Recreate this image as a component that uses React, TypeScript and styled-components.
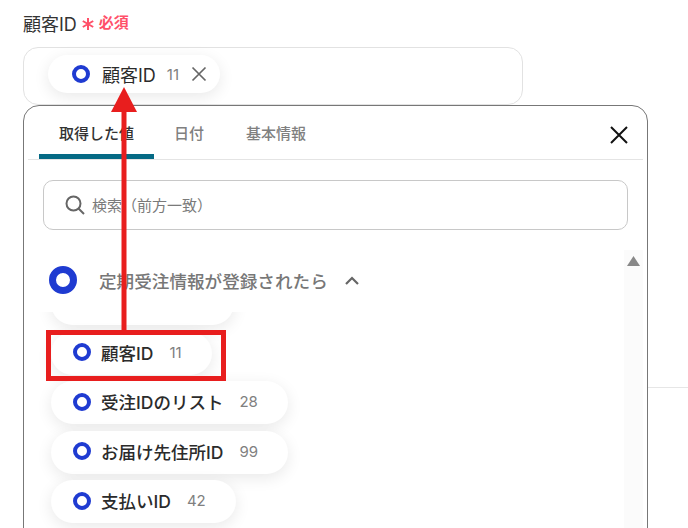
import React from 'react'
import styled, { createGlobalStyle } from 'styled-components'

const GlobalStyle = createGlobalStyle`
  html, body {
    margin: 0;
    background: #fff;
    font-family: Inter, "Noto Sans CJK JP", "Noto Sans", sans-serif;
  }
`
const Page = styled.div`
  position: relative;
  width: 688px;
  height: 528px;
  overflow: hidden;
  box-sizing: border-box;
  padding: 11px 0 0 23px;
`
const SideRule = styled.div`
  position: absolute;
  left: 648px;
  right: 0;
  top: 387px;
  height: 1px;
  background: #e6e6e6;
`
const Label = styled.div`
  display: flex;
  align-items: center;
  height: 23px;
  font-size: 18px;
  color: #333;
  .asterisk {
    margin-left: 5px;
    width: 12px;
    height: 12px;
    margin-top: 2px;
  }
  .required {
    margin-left: 5px;
    margin-bottom: 2px;
    font-size: 15px;
    font-weight: 700;
    color: #ff5069;
  }
`
const Field = styled.div`
  box-sizing: border-box;
  width: 500px;
  height: 58px;
  margin-top: 13px;
  padding: 7px 0 0 24px;
  border: 1px solid #e2e2e2;
  border-radius: 15px;
`
const Chip = styled.div<{ $width: number; $height?: number }>`
  box-sizing: border-box;
  display: flex;
  align-items: center;
  flex: none;
  width: ${(p) => p.$width}px;
  height: ${(p) => p.$height ?? 43}px;
  padding: 0 0 ${(p) => (p.$height ? 0 : 2)}px ${(p) => (p.$height ? 24 : 22)}px;
  background: #fff;
  border-radius: 22px;
  box-shadow: 0 4px 16px rgba(0, 0, 0, 0.09);
`
const ChipName = styled.span<{ $selected?: boolean }>`
  margin-left: ${(p) => (p.$selected ? 12 : 10)}px;
  font-size: ${(p) => (p.$selected ? 18 : 17.5)}px;
  font-weight: ${(p) => (p.$selected ? 400 : 500)};
  color: #2b2b2b;
  white-space: nowrap;
`
const ChipCount = styled.span<{ $selected?: boolean }>`
  margin-left: ${(p) => (p.$selected ? 11 : 16)}px;
  font-size: 15px;
  color: #808080;
`
const RemoveIcon = styled.svg`
  margin-left: 12px;
`
const Modal = styled.div`
  box-sizing: border-box;
  width: 625px;
  height: 470px;
  margin-top: 0;
  padding: 0 4px;
  background: #fff;
  border: 1px solid #777;
  border-radius: 16px;
  overflow: hidden;
`
const TabBar = styled.div`
  position: relative;
  display: flex;
  height: 53px;
  padding-left: 11px;
  border-bottom: 1px solid #e4e4e4;
`
const Tab = styled.div<{ $active?: boolean; $width: number }>`
  box-sizing: border-box;
  width: ${(p) => p.$width}px;
  height: 53px;
  padding-top: 16px;
  text-align: center;
  font-size: 15px;
  line-height: 24px;
  font-weight: 500;
  color: ${(p) => (p.$active ? '#333' : '#808080')};
  border-bottom: ${(p) => (p.$active ? '5px solid #056a85' : 'none')};
  border-radius: ${(p) => (p.$active ? '4px 4px 0 0' : '0')};
`
const CloseButton = styled.svg`
  position: absolute;
  right: 15px;
  top: 20px;
`
const SearchBox = styled.div`
  box-sizing: border-box;
  display: flex;
  align-items: center;
  width: 585px;
  height: 50px;
  margin: 20px 0 0 15px;
  padding-left: 21px;
  border: 1px solid #c8c8c8;
  border-radius: 10px;
  font-size: 15px;
  color: #7a7a7a;
  span {
    margin: 0 0 2px 7px;
  }
`
const Results = styled.div`
  position: relative;
  display: flex;
  flex-direction: column;
  height: 278px;
  margin-top: 20px;
`
const GroupHeader = styled.div`
  display: flex;
  align-items: center;
  height: 60px;
  margin-bottom: 2px;
  padding-left: 21px;
  font-size: 17.6px;
  font-weight: 500;
  color: #777;
  .name {
    margin-left: 22px;
  }
  .chevron {
    margin-left: 17px;
  }
`
const ChipList = styled.div`
  flex: 1;
  display: flex;
  flex-direction: column;
  gap: 6.5px;
  margin-right: 24px;
  padding-left: 23px;
  overflow: hidden;
`
const ClippedChip = styled(Chip)`
  margin-top: -30px;
`
const Scrollbar = styled.div`
  position: absolute;
  right: 0;
  top: 0;
  bottom: 0;
  width: 19px;
  background: #fbfbfb;
  display: flex;
  justify-content: center;
  padding-top: 6px;
  box-sizing: border-box;
`
const HighlightBox = styled.div`
  position: absolute;
  left: 46px;
  top: 330px;
  width: 180px;
  height: 51px;
  box-sizing: border-box;
  border: 5px solid #e81e1e;
`
const Arrow = styled.svg`
  position: absolute;
  left: 108px;
  top: 84px;
`

const Ring = ({ size = 18, stroke = 4 }: { size?: number; stroke?: number }) => (
  <svg width={size} height={size} viewBox={`0 0 ${size} ${size}`} style={{ flex: 'none' }}>
    <circle
      cx={size / 2}
      cy={size / 2}
      r={(size - stroke) / 2}
      fill="none"
      stroke="#1f3bd1"
      strokeWidth={stroke}
    />
  </svg>
)

const outputs = [
  { name: '顧客ID', count: 11, width: 161 },
  { name: '受注IDのリスト', count: 28, width: 237 },
  { name: 'お届け先住所ID', count: 99, width: 237 },
  { name: '支払いID', count: 42, width: 185 },
]

export default function App() {
  return (
    <Page>
      <GlobalStyle />
      <SideRule />
      <Label>
        顧客ID
        <svg className="asterisk" viewBox="0 0 12 12">
          <path
            d="M6 0v12M.8 3l10.4 6M11.2 3L.8 9"
            stroke="#ff5069"
            strokeWidth="2"
            fill="none"
          />
        </svg>
        <span className="required">必須</span>
      </Label>
      <Field>
        <Chip $width={172} $height={38}>
          <Ring />
          <ChipName $selected>顧客ID</ChipName>
          <ChipCount $selected>11</ChipCount>
          <RemoveIcon width="16" height="16" viewBox="0 0 16 16">
            <path d="M1.5 1.5l13 13M14.5 1.5l-13 13" stroke="#666" strokeWidth="1.7" fill="none" />
          </RemoveIcon>
        </Chip>
      </Field>
      <Modal>
        <TabBar>
          <Tab $active $width={115}>取得した値</Tab>
          <Tab $width={70}>日付</Tab>
          <Tab $width={104}>基本情報</Tab>
          <CloseButton width="18" height="18" viewBox="0 0 18 18">
            <path d="M1 1l16 16M17 1L1 17" stroke="#111" strokeWidth="2" fill="none" />
          </CloseButton>
        </TabBar>
        <SearchBox>
          <svg width="20" height="20" viewBox="0 0 20 20">
            <circle cx="8.5" cy="8.5" r="7" fill="none" stroke="#666" strokeWidth="2" />
            <path d="M13.5 13.5l5.5 5.5" stroke="#666" strokeWidth="2" />
          </svg>
          <span>検索（前方一致）</span>
        </SearchBox>
        <Results>
          <GroupHeader>
            <Ring size={28} stroke={7} />
            <span className="name">定期受注情報が登録されたら</span>
            <svg className="chevron" width="14" height="9" viewBox="0 0 14 9">
              <path d="M1 8l6-6 6 6" stroke="#666" strokeWidth="2.2" fill="none" />
            </svg>
          </GroupHeader>
          <ChipList>
            <ClippedChip $width={183} />
            {outputs.map((item) => (
              <Chip key={item.name} $width={item.width}>
                <Ring />
                <ChipName>{item.name}</ChipName>
                <ChipCount>{item.count}</ChipCount>
              </Chip>
            ))}
          </ChipList>
          <Scrollbar>
            <svg width="13" height="10" viewBox="0 0 13 10">
              <path d="M6.5 0L13 10H0z" fill="#888" />
            </svg>
          </Scrollbar>
        </Results>
      </Modal>
      <HighlightBox />
      <Arrow width="32" height="250" viewBox="0 0 32 250">
        <path d="M16 3L29 28H3z" fill="#e81e1e" />
        <rect x="13.5" y="26" width="5" height="222" fill="#e81e1e" />
      </Arrow>
    </Page>
  )
}
